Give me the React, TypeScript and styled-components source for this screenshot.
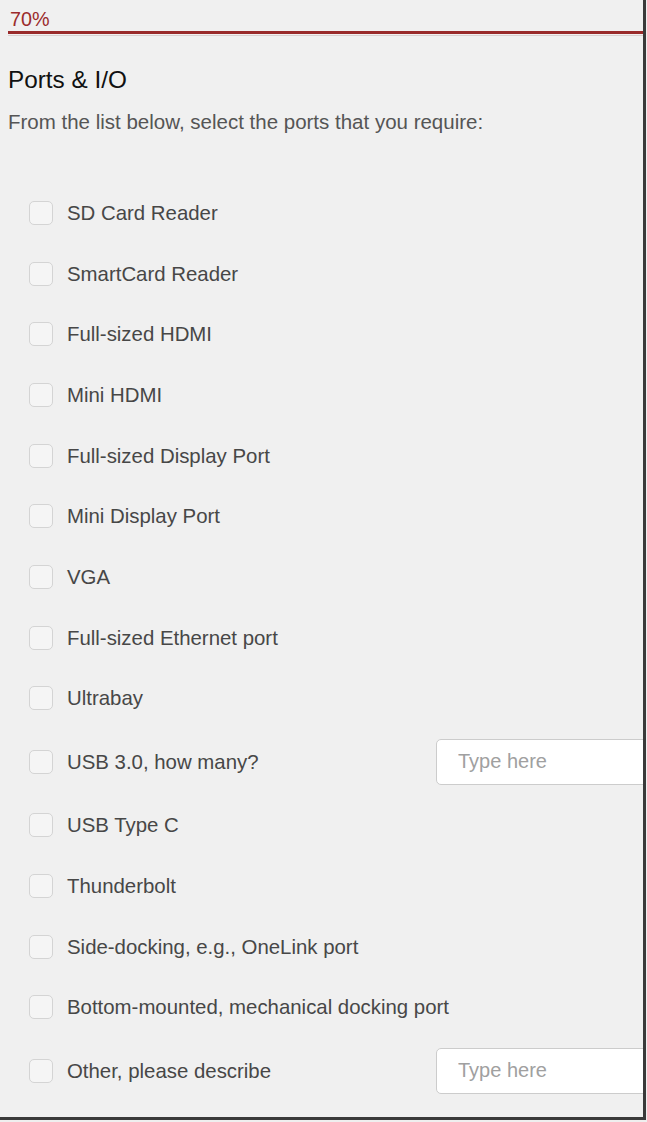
import React from "react";
import styled, { createGlobalStyle } from "styled-components";

const Global = createGlobalStyle`
  html, body { margin: 0; padding: 0; background: #efefef; }
  body { font-family: "Liberation Sans", Arial, sans-serif; }
  * { box-sizing: border-box; }
`;

const Frame = styled.div`
  box-sizing: content-box;
  width: 643px;
  height: 1117px;
  overflow: hidden;
  background: #f0f0f0;
  border-right: 3px solid #3a3a3a;
  border-bottom: 3px solid #3a3a3a;
  padding: 0;
`;

const Inner = styled.div`
  padding: 8px 0 0 8px;
`;

const ProgressLabel = styled.div`
  font-size: 19.8px;
  line-height: 22px;
  color: #9b2c2c;
  padding-left: 2px;
`;

const ProgressTrack = styled.div`
  margin-top: 1px;
  height: 5px;
  border-bottom: 1px solid #d9cfcf;
  display: flex;
  flex-direction: column;
`;

const ProgressFill = styled.div`
  height: 3px;
  background: #992a2a;
`;

const Heading = styled.h2`
  margin: 30px 0 0 0;
  font-size: 24.3px;
  line-height: 28px;
  font-weight: 400;
  color: #111;
`;

const Intro = styled.p`
  margin: 16px 0 0 0;
  font-size: 20.5px;
  line-height: 24px;
  color: #555;
`;

const List = styled.div`
  margin-top: 48.6px;
  display: flex;
  flex-direction: column;
`;

const Row = styled.label`
  display: flex;
  align-items: center;
  min-height: 60.7px;
  padding: 10px 0;
`;

const Box = styled.span`
  flex: 0 0 24px;
  width: 24px;
  height: 24px;
  margin-left: 21px;
  border: 1px solid #d4d4d4;
  border-radius: 5px;
  background: #f5f5f5;
`;

const Label = styled.span<{ $wide?: boolean }>`
  margin-left: 14px;
  font-size: 20.4px;
  line-height: 22px;
  color: #474747;
  flex: ${(p) => (p.$wide ? "0 0 369px" : "1 1 auto")};
`;

const Input = styled.input`
  flex: 0 0 240px;
  width: 240px;
  height: 46px;
  border: 1px solid #cccccc;
  border-radius: 5px;
  background: #fff;
  padding: 0 21px;
  font-family: "Liberation Sans", Arial, sans-serif;
  font-size: 20px;
  color: #444;
  outline: none;
  &::placeholder { color: #a0a0a0; }
`;

const items: { label: string; input?: boolean }[] = [
  { label: "SD Card Reader" },
  { label: "SmartCard Reader" },
  { label: "Full-sized HDMI" },
  { label: "Mini HDMI" },
  { label: "Full-sized Display Port" },
  { label: "Mini Display Port" },
  { label: "VGA" },
  { label: "Full-sized Ethernet port" },
  { label: "Ultrabay" },
  { label: "USB 3.0, how many?", input: true },
  { label: "USB Type C" },
  { label: "Thunderbolt" },
  { label: "Side-docking, e.g., OneLink port" },
  { label: "Bottom-mounted, mechanical docking port" },
  { label: "Other, please describe", input: true },
];

export default function App() {
  return (
    <>
      <Global />
      <Frame>
        <Inner>
          <ProgressLabel>70%</ProgressLabel>
          <ProgressTrack>
            <ProgressFill />
          </ProgressTrack>
          <Heading>Ports &amp; I/O</Heading>
          <Intro>From the list below, select the ports that you require:</Intro>
          <List>
            {items.map((it) => (
              <Row key={it.label}>
                <Box />
                <Label $wide={it.input}>{it.label}</Label>
                {it.input && <Input placeholder="Type here" />}
              </Row>
            ))}
          </List>
        </Inner>
      </Frame>
    </>
  );
}
